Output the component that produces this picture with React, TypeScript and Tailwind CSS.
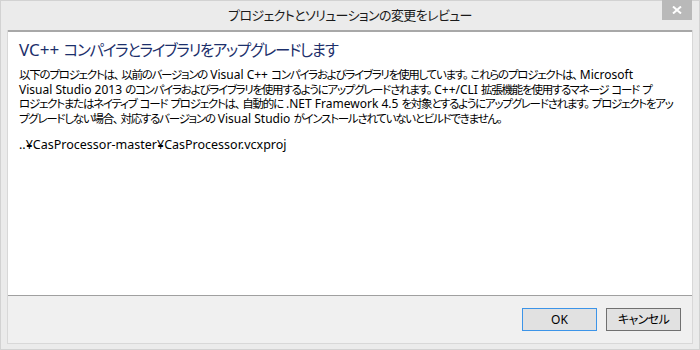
import React from 'react'

const font = "font-['Noto_Sans','Noto_Sans_CJK_JP',sans-serif] [font-feature-settings:'palt']"

const lines = [
  '以下のプロジェクトは、以前のバージョンの Visual C++ コンパイラおよびライブラリを使用しています。これらのプロジェクトは、Microsoft',
  'Visual Studio 2013 のコンパイラおよびライブラリを使用するようにアップグレードされます。C++/CLI 拡張機能を使用するマネージ コード プ',
  'ロジェクトまたはネイティブ コード プロジェクトは、自動的に .NET Framework 4.5 を対象とするようにアップグレードされます。プロジェクトをアッ',
  'プグレードしない場合、対応するバージョンの Visual Studio がインストールされていないとビルドできません。',
]

// Japanese runs get tightened so they take the width of the narrow UI font
const cjk = /([\u3000-\u30ff\u4e00-\u9fff\uff00-\uffef]+)/
const punct = /([、。])/

function Mixed({ text, cjkClass }: { text: string; cjkClass: string }) {
  return (
    <>
      {text.split(cjk).map((part, i) =>
        cjk.test(part) ? (
          <span key={i} className={cjkClass}>
            {part.split(punct).map((p, j) =>
              p === '、' || p === '。' ? <span key={j} className="mr-[3px]">{p}</span> : p
            )}
          </span>
        ) : (
          <span key={i}>{part}</span>
        )
      )}
    </>
  )
}

function Button({ label, primary }: { label: string; primary?: boolean }) {
  return (
    <button
      className={`w-[75px] h-[23px] bg-[#e1e1e1] text-[12px] text-black flex items-center justify-center border ${
        primary ? 'border-[#3c94e8]' : 'border-[#707070]'
      }`}
    >
      <Mixed text={label} cjkClass="tracking-[-0.6px]" />
    </button>
  )
}

export default function App() {
  return (
    <div className={`w-[700px] h-[350px] bg-[#ebebeb] border border-[#d2d2d2] px-[6px] flex flex-col ${font}`}>
      {/* title bar */}
      <div className="relative h-[29px] shrink-0 flex items-center justify-center">
        <span className="text-[13px] text-[#1a1a1a] pt-[1px] tracking-[-0.6px]">プロジェクトとソリューションの変更をレビュー</span>
        <div className="absolute right-[1px] top-[-1px] w-[30px] h-[20px] bg-[#b9b9b9] flex items-center justify-center">
          <svg width="10" height="8" viewBox="0 0 10 8">
            <path d="M1 0.5 L9 7.5 M9 0.5 L1 7.5" stroke="#fff" strokeWidth="2" />
          </svg>
        </div>
      </div>

      {/* panel */}
      <div className="h-[314px] flex flex-col border-x border-b border-[#d8d8d8]">
        <div className="flex-1 bg-white border-t-2 border-[#a8a8a8] pl-[11px] pr-[11px]">
          <div className="mt-[7px] h-[22px] leading-[22px] text-[17px] text-[#1c2f6b] whitespace-nowrap">
            <Mixed text="VC++ コンパイラとライブラリをアップグレードします" cjkClass="text-[15.5px] tracking-[-1.3px]" />
          </div>
          <div className="mt-[7px] text-[12px] leading-[14.5px] text-black">
            {lines.map((l, i) => (
              <div key={i} className="whitespace-nowrap">
                <Mixed text={l} cjkClass="text-[11.5px] tracking-[-1.25px]" />
              </div>
            ))}
          </div>
          <div className="mt-[12px] text-[12.5px] leading-[14.5px] text-black whitespace-nowrap">
            ..¥CasProcessor-master¥CasProcessor.vcxproj
          </div>
        </div>
        <div className="h-[48px] shrink-0 bg-[#f0f0f0] border-t border-[#a0a0a0] flex justify-end items-start gap-[9px] pt-[12px] pr-[11px]">
          <Button label="OK" primary />
          <Button label="キャンセル" />
        </div>
      </div>
    </div>
  )
}
